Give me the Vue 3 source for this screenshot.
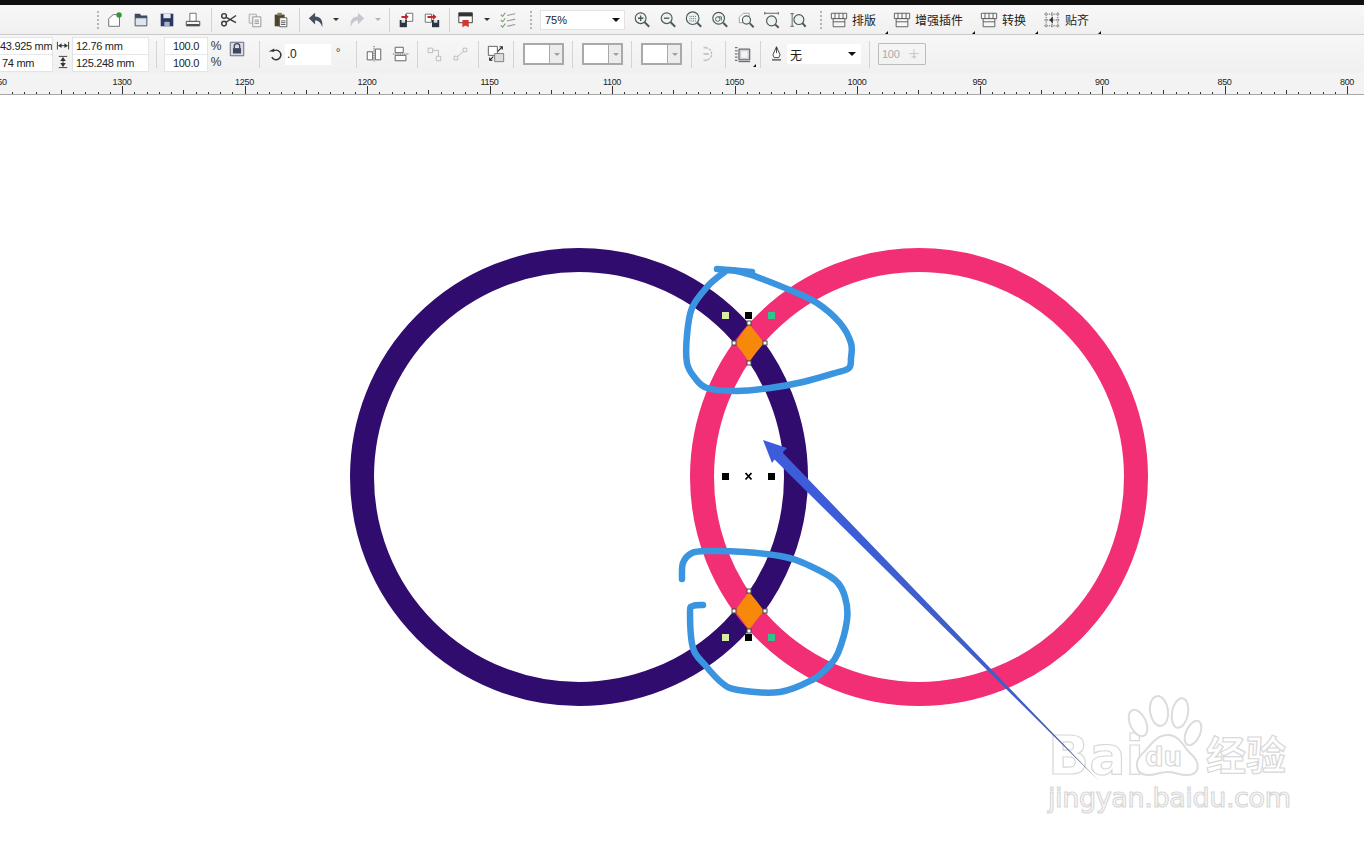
<template>
  <div class="app">
    <!-- 图标定义 -->
    <svg class="defs" aria-hidden="true">
      <symbol id="i-new" viewBox="0 0 20 20">
        <path d="M3 17V8.500L8 4h7v13z" fill="#fff" stroke="#666" />
        <circle cx="14.500" cy="4.500" r="3" fill="#2f9a35" />
      </symbol>
      <symbol id="i-open" viewBox="0 0 20 20">
        <path d="M3 3h6l1 2h7v3H3z" fill="#3c4a60" />
        <path d="M3.500 7.500h13v9h-13z" fill="#dfe5ec" stroke="#3c4a60" />
      </symbol>
      <symbol id="i-save" viewBox="0 0 20 20">
        <path d="M3 3h14v14H3z" fill="#2a3765" />
        <path d="M6 3h8v5H6z" fill="#e6e8ee" />
        <path d="M7 12h6v5H7z" fill="#aab2c8" />
      </symbol>
      <symbol id="i-print" viewBox="0 0 20 20">
        <path d="M6.500 2.500h7v9h-7z" fill="#fff" stroke="#666" />
        <path d="M2.500 11.500h15v5h-15z" fill="#f4f4f4" stroke="#444" />
        <path d="M3 14.500h14v2H3z" fill="#444" />
      </symbol>
      <symbol id="i-cut" viewBox="0 0 20 20">
        <g fill="none" stroke="#3a3a3a" stroke-width="1.600">
          <circle cx="4.500" cy="5.500" r="2.600" />
          <circle cx="4.500" cy="14" r="2.600" />
          <path d="M6.800 7l11 6M6.800 12.500l11-7.500" />
        </g>
      </symbol>
      <symbol id="i-copy" viewBox="0 0 20 20">
        <path d="M3.500 3.500h8v10h-8z" fill="#eee" stroke="#aaa" />
        <path d="M7.500 6.500h9v11h-9z" fill="#fafafa" stroke="#8d8d8d" />
        <path d="M9.500 10h5M9.500 12h5M9.500 14h5" stroke="#8d8d8d" />
      </symbol>
      <symbol id="i-paste" viewBox="0 0 20 20">
        <path d="M3 4h11v13H3z" fill="#4d432f" />
        <path d="M6 2h5v3H6z" fill="#8b7f66" />
        <path d="M8.500 7.500h8v10h-8z" fill="#fff" stroke="#555" />
        <path d="M10 11h5M10 13h5M10 15h5" stroke="#555" />
      </symbol>
      <symbol id="i-undo" viewBox="0 0 20 20">
        <path d="M2 8l7-6v4c6 0 9 4 8 12-1.500-5-4-7.500-8-7.500V15z" fill="#47505f" />
      </symbol>
      <symbol id="i-redo" viewBox="0 0 20 20">
        <path d="M18 8l-7-6v4c-6 0-9 4-8 12 1.500-5 4-7.500 8-7.500V15z" fill="#c5c9cd" />
      </symbol>
      <symbol id="i-import" viewBox="0 0 20 20">
        <path d="M10.500 2.500h7v9h-7z" fill="#fff" stroke="#666" />
        <path d="M3 10h8v8H3z" fill="#2b3440" />
        <path d="M5 10h4v3H5z" fill="#ddd" />
        <path d="M5 5.500h4V3l4 3.500-4 3.500V7.800H5z" fill="#c8232a" />
      </symbol>
      <symbol id="i-export" viewBox="0 0 20 20">
        <path d="M2.500 3.500h7v9h-7z" fill="#fff" stroke="#666" />
        <path d="M10 10h8v8h-8z" fill="#2b3440" />
        <path d="M12 10h4v3h-4z" fill="#ddd" />
        <path d="M5 5.500h6V3l4 3.500-4 3.500V7.800H5z" fill="#c8232a" />
      </symbol>
      <symbol id="i-launch" viewBox="0 0 20 20">
        <path d="M2 2h15v11H2z" fill="#fff" stroke="#333" />
        <path d="M2 2h15v4H2z" fill="#333" />
        <path d="M6 10h7v8l-3.500-2L6 18z" fill="#d4362e" />
      </symbol>
      <symbol id="i-opts" viewBox="0 0 20 20">
        <g fill="none" stroke="#7f9d63" stroke-width="1.200">
          <path d="M2 4l2 2 3-4M2 10l2 2 3-4M2 16l2 2 3-4" />
          <path d="M9 5l9-2M9 11l9-2M9 17l9-2" stroke="#999" />
        </g>
      </symbol>
      <symbol id="i-zoom-in" viewBox="0 0 20 20">
        <g fill="none" stroke="#4d5a5c">
          <circle cx="8.500" cy="8" r="6" fill="#eef3f2" stroke-width="1.300" />
          <path d="M13 12.500l5 5" stroke-width="2.200" />
          <path d="M5.500 8h6M8.500 5v6" stroke-width="1.500" />
        </g>
      </symbol>
      <symbol id="i-zoom-out" viewBox="0 0 20 20">
        <g fill="none" stroke="#4d5a5c">
          <circle cx="8.500" cy="8" r="6" fill="#eef3f2" stroke-width="1.300" />
          <path d="M13 12.500l5 5" stroke-width="2.200" />
          <path d="M5.500 8h6" stroke-width="1.500" />
        </g>
      </symbol>
      <symbol id="i-zoom-sel" viewBox="0 0 20 20">
        <g fill="none" stroke="#4d5a5c">
          <circle cx="8.500" cy="8" r="7" fill="#eef3f2" stroke-width="1.300" />
          <path d="M13.500 13l4.500 4.500" stroke-width="2.200" />
          <path d="M5 6h7M5 8.500h7M5 11h7" stroke-dasharray="1 1" />
        </g>
      </symbol>
      <symbol id="i-zoom-all" viewBox="0 0 20 20">
        <g fill="none" stroke="#4d5a5c">
          <circle cx="8.500" cy="8" r="6.500" fill="#eef3f2" stroke-width="1.300" />
          <path d="M13.500 13l4.500 4.500" stroke-width="2.200" />
          <circle cx="7.500" cy="9" r="2.500" />
          <path d="M7.500 6.500h4v4" />
        </g>
      </symbol>
      <symbol id="i-zoom-page" viewBox="0 0 20 20">
        <g fill="none" stroke="#4d5a5c">
          <path d="M2.500 7L7 2.500h6.500V13h-11z" fill="#fff" stroke="#999" />
          <circle cx="10.500" cy="10" r="4.500" fill="#eef3f2" stroke-width="1.300" />
          <path d="M14 13.500l4.500 4.500" stroke-width="2.200" />
        </g>
      </symbol>
      <symbol id="i-zoom-w" viewBox="0 0 20 20">
        <g fill="none" stroke="#4d5a5c">
          <path d="M2 2.500h15M2 1v3M17 1v3" />
          <circle cx="9.500" cy="11" r="5.500" fill="#eef3f2" stroke-width="1.300" />
          <path d="M13.500 15l4 3.500" stroke-width="2.200" />
        </g>
      </symbol>
      <symbol id="i-zoom-h" viewBox="0 0 20 20">
        <g fill="none" stroke="#4d5a5c">
          <path d="M3.500 3v14M1.500 3h4M1.500 17h4" />
          <circle cx="11" cy="9.500" r="5.500" fill="#eef3f2" stroke-width="1.300" />
          <path d="M15 13.500l3.500 4" stroke-width="2.200" />
        </g>
      </symbol>
      <symbol id="i-menu" viewBox="0 0 20 20">
        <g fill="#f6f6f6" stroke="#555">
          <path d="M1.500 2.500h17v6h-17z" />
          <path d="M3.500 8.500h13v9h-13z" />
          <path d="M5.500 2.500v6M10 2.500v6M14.500 2.500v6M3.500 12h13" />
        </g>
      </symbol>
      <symbol id="i-snap" viewBox="0 0 20 20">
        <g fill="none" stroke="#555" stroke-dasharray="1.500 1">
          <path d="M1.500 3.500h17M1.500 16.500h17M3.500 1.500v17M16.500 1.500v17M1.500 10h17M10 1.500v17" />
        </g>
        <path d="M11 6v8l-4-4z" fill="#333" />
      </symbol>
      <symbol id="i-hsize" viewBox="0 0 20 20">
        <path d="M2 4v11M18 4v11M4 9.500h12" stroke="#333" fill="none" stroke-width="1.300" />
        <path d="M3 9.500L8 6v7zM17 9.500L12 6v7z" fill="#333" />
      </symbol>
      <symbol id="i-vsize" viewBox="0 0 20 20">
        <path d="M4 2h12M4 18h12M10 4v12" stroke="#333" fill="none" stroke-width="1.300" />
        <path d="M10 3L6 8.500h8zM10 17l-4-5.500h8z" fill="#333" />
      </symbol>
      <symbol id="i-lock" viewBox="0 0 20 20">
        <path d="M2.500 2.500h15v15h-15z" fill="#d9dde3" stroke="#5a6072" />
        <path d="M7 9V7a3 3 0 016 0v2" fill="none" stroke="#3f4660" stroke-width="1.500" />
        <path d="M5.500 9h9v6h-9z" fill="#3f4660" />
      </symbol>
      <symbol id="i-rotate" viewBox="0 0 20 20">
        <path d="M7 7a6 6 0 11-1 7" fill="none" stroke="#333" stroke-width="1.800" />
        <path d="M2 7h7V3z" fill="#333" />
      </symbol>
      <symbol id="i-align1" viewBox="0 0 20 20">
        <path d="M2.500 7.500h6v9h-6zM11.500 4.500h6v12h-6z" fill="#fff" stroke="#555" />
        <path d="M10 1v18" stroke="#555" stroke-dasharray="1.500 1" />
      </symbol>
      <symbol id="i-align2" viewBox="0 0 20 20">
        <path d="M3.500 2.500h9v6h-9zM3.500 11.500h12v6h-12z" fill="#fff" stroke="#555" />
        <path d="M1 10h18" stroke="#555" stroke-dasharray="1.500 1" />
      </symbol>
      <symbol id="i-node1" viewBox="0 0 20 20">
        <path d="M3.500 3.500h5v5h-5zM12.500 12.500h5v5h-5zM8.500 6h6.500v6.500" fill="none" stroke="#b9b9b9" />
      </symbol>
      <symbol id="i-node2" viewBox="0 0 20 20">
        <path d="M3.500 12.500h4v4h-4zM13.500 3.500h4v4h-4zM7.500 12.500l6-5" fill="none" stroke="#b9b9b9" />
      </symbol>
      <symbol id="i-swap" viewBox="0 0 20 20">
        <path d="M1.500 1.500h10v10h-10z" fill="#fff" stroke="#555" />
        <path d="M8.500 9.500h10v9h-10z" fill="#ddd" stroke="#777" />
        <path d="M12 7l5-5M14 2h3v3M3 17l4-4M3 14v3h3" fill="none" stroke="#222" stroke-width="1.200" />
      </symbol>
      <symbol id="i-wrap" viewBox="0 0 20 20">
        <path d="M7 3a7 7 0 010 14" fill="none" stroke="#bbb" stroke-width="1.400" stroke-dasharray="3 1" />
        <path d="M5 3h4M5 10h6M5 17h4" stroke="#c7c7c7" stroke-width="2" />
      </symbol>
      <symbol id="i-shadow" viewBox="0 0 20 20">
        <path d="M5.500 4.500h12v12h-12z" fill="#cfd2d6" stroke="#444" />
        <path d="M8 7h7v7H8z" fill="#f5f5f5" />
        <path d="M1 3h3M1 6.500h3M1 10h3M1 13.500h3M1 17h3M5 18.500h13" stroke="#444" />
      </symbol>
      <symbol id="i-pen" viewBox="0 0 20 20">
        <path d="M10 2l4 9-1.500 3h-5L6 11z" fill="#fff" stroke="#333" />
        <path d="M10 2v7" stroke="#333" />
        <path d="M5 15.500h10v2H5z" fill="#777" />
      </symbol>
      <symbol id="i-spin" viewBox="0 0 20 20">
        <path d="M3 9.500h14M10 3v14M6.500 14h7" fill="none" stroke="#b3b3b3" />
      </symbol>
    </svg>

    <div class="top-bar"></div>

    <!-- 标准工具栏 -->
    <div class="toolbar">
      <template v-for="(item, i) in topTools" :key="i">
        <span v-if="item.kind === 'grip'" class="grip" :class="item.cls"></span>
        <span v-else-if="item.kind === 'sep'" class="top-sep" :class="item.cls"></span>
        <span v-else-if="item.kind === 'drop'" class="drop" :class="item.cls"></span>
        <span v-else class="tool" :class="item.cls">
          <svg class="ico"><use :href="'#' + item.icon" /></svg>
        </span>
      </template>

      <div class="zoom-combo">
        <span>75%</span>
        <i class="arrow"></i>
      </div>

      <span v-for="icon in zoomTools" :key="icon" class="tool">
        <svg class="ico"><use :href="'#' + icon" /></svg>
      </span>

      <span class="grip grip-zoom"></span>

      <div v-for="menu in menus" :key="menu.text" class="menu-item">
        <svg class="menu-ico"><use :href="'#' + menu.icon" /></svg>
        <span>{{ menu.text }}</span>
        <i class="corner"></i>
      </div>
    </div>

    <!-- 属性栏 -->
    <div class="propbar">
      <div class="field-stack w52">
        <div class="cell clip">43.925 mm</div>
        <div class="cell pad2">74 mm</div>
      </div>
      <div class="icon-stack">
        <svg class="small-ico"><use href="#i-hsize" /></svg>
        <svg class="small-ico"><use href="#i-vsize" /></svg>
      </div>
      <div class="field-stack w75">
        <div class="cell pad3">12.76 mm</div>
        <div class="cell pad3">125.248 mm</div>
      </div>

      <span class="sep ml8"></span>

      <div class="field-stack w42 ml8">
        <div class="cell center">100.0</div>
        <div class="cell center">100.0</div>
      </div>
      <div class="percent">
        <span>%</span>
        <span>%</span>
      </div>
      <svg class="lock ml3"><use href="#i-lock" /></svg>

      <span class="sep ml13"></span>

      <svg class="rotate ml7"><use href="#i-rotate" /></svg>
      <div class="angle ml2">.0</div>
      <span class="degree">°</span>

      <span class="sep ml11"></span>

      <span class="prop-tool w27 ml3"><svg class="ico"><use href="#i-align1" /></svg></span>
      <span class="prop-tool w27"><svg class="ico"><use href="#i-align2" /></svg></span>

      <span class="sep ml3"></span>

      <span class="prop-tool ml3"><svg class="ico"><use href="#i-node1" /></svg></span>
      <span class="prop-tool"><svg class="ico"><use href="#i-node2" /></svg></span>

      <span class="sep ml5"></span>

      <span class="prop-tool ml4"><svg class="ico"><use href="#i-swap" /></svg></span>

      <span class="sep ml4"></span>

      <div class="swatch ml9"><b></b><i class="arrow gray"></i></div>
      <span class="sep ml8"></span>
      <div class="swatch ml9"><b></b><i class="arrow gray"></i></div>
      <span class="sep ml8"></span>
      <div class="swatch ml9"><b></b><i class="arrow gray"></i></div>
      <span class="sep ml9"></span>

      <span class="prop-tool ml3"><svg class="ico"><use href="#i-wrap" /></svg></span>
      <span class="sep ml4"></span>
      <span class="prop-tool ml4"><svg class="ico"><use href="#i-shadow" /></svg><i class="corner"></i></span>
      <span class="sep ml4"></span>

      <svg class="pen ml5"><use href="#i-pen" /></svg>
      <div class="line-combo">
        <span>无</span>
        <i class="arrow"></i>
      </div>

      <span class="sep ml8"></span>

      <div class="spin-box ml8">
        <span>100</span>
        <svg class="small-ico"><use href="#i-spin" /></svg>
      </div>
    </div>

    <!-- 标尺 -->
    <svg class="ruler" viewBox="0 73 1364 22">
      <rect x="0" y="73" width="1364" height="22" fill="#f3f3f3" />
      <path :d="tickPath" stroke="#333" fill="none" />
      <path d="M0 94.500H1364" stroke="#a8a8a8" fill="none" />
      <text
        v-for="mark in rulerMarks"
        :key="mark.label"
        :x="mark.x"
        y="85"
        class="ruler-text"
      >{{ mark.label }}</text>
    </svg>

    <!-- 画布 -->
    <svg class="canvas" viewBox="0 95 1364 749">
      <defs>
        <linearGradient id="arrow-fade" gradientUnits="userSpaceOnUse" x1="770" y1="450" x2="1098" y2="780">
          <stop offset="0" stop-color="#3c5cdc" />
          <stop offset="0.75" stop-color="#3f5fc8" />
          <stop offset="1" stop-color="#5a6078" />
        </linearGradient>
      </defs>

      <circle cx="579" cy="477" r="217" fill="none" stroke="#300c6e" stroke-width="24" />
      <circle cx="919" cy="477" r="217" fill="none" stroke="#f22e75" stroke-width="24" />

      <path class="overlap" d="M749 324A229 229 0 0 0 735 343A205 205 0 0 1 749 362A205 205 0 0 1 764 343A229 229 0 0 0 749 324Z" />
      <path class="overlap" d="M749 592A205 205 0 0 0 735 611A229 229 0 0 1 749 630A229 229 0 0 1 764 611A205 205 0 0 0 749 592Z" />

      <rect v-for="(n, i) in nodes" :key="i" class="node" :x="n[0] - 2" :y="n[1] - 2" width="4" height="4" />

      <rect
        v-for="(h, i) in handles"
        :key="'h' + i"
        :x="h.x - 3.500"
        :y="h.y - 3.500"
        width="7"
        height="7"
        :fill="h.color"
      />
      <path d="M745.500 473l6 6.500M751.500 473l-6 6.500" stroke="#000" stroke-width="1.800" />

      <!-- 水印 -->
      <g class="watermark">
        <text x="1048" y="774" class="wm-bai">Bai</text>
        <ellipse cx="1138" cy="723" rx="8" ry="14" transform="rotate(-25 1138 723)" />
        <ellipse cx="1159" cy="711" rx="9" ry="15" transform="rotate(-8 1159 711)" />
        <ellipse cx="1180" cy="713" rx="8" ry="15" transform="rotate(10 1180 713)" />
        <ellipse cx="1193" cy="733" rx="7" ry="13" transform="rotate(25 1193 733)" />
        <path d="M1168 735c12 0 16 13 23 19 9 8 10 21-4 21-8 0-12-3-19-3s-13 3-20 3c-13 0-14-13-6-21 8-7 13-19 26-19z" />
        <text x="1145" y="766" class="wm-du">du</text>
        <text x="1206" y="770" class="wm-cn">经验</text>
        <text x="1048" y="807" class="wm-url" textLength="243">jingyan.baidu.com</text>
      </g>

      <!-- 手绘标注 -->
      <path class="scribble" d="M717 269L752 272" />
      <path class="scribble" :d="smooth(scribbleTop)" />
      <path class="scribble" :d="smooth(scribbleBottom)" />

      <!-- 箭头 -->
      <path d="M763 440L787 448L782.500 452.500L1098 780L774.500 459.500L772 463Z" fill="url(#arrow-fade)" />
    </svg>
  </div>
</template>

<script setup>
import { computed } from "vue";

// 顶部工具按钮
const topTools = [
  { kind: "grip" },
  { icon: "i-new" },
  { icon: "i-open" },
  { icon: "i-save" },
  { icon: "i-print" },
  { kind: "sep", cls: "wide" },
  { icon: "i-cut" },
  { icon: "i-copy" },
  { icon: "i-paste" },
  { kind: "sep", cls: "wide" },
  { icon: "i-undo", cls: "w24" },
  { kind: "drop" },
  { icon: "i-redo" },
  { kind: "drop", cls: "off" },
  { kind: "sep" },
  { icon: "i-import" },
  { icon: "i-export" },
  { kind: "sep" },
  { icon: "i-launch" },
  { kind: "drop" },
  { icon: "i-opts" },
  { kind: "grip", cls: "grip-combo" },
];

const zoomTools = [
  "i-zoom-in",
  "i-zoom-out",
  "i-zoom-sel",
  "i-zoom-all",
  "i-zoom-page",
  "i-zoom-w",
  "i-zoom-h",
];

const menus = [
  { icon: "i-menu", text: "排版" },
  { icon: "i-menu", text: "增强插件" },
  { icon: "i-menu", text: "转换" },
  { icon: "i-snap", text: "贴齐" },
];

// 标尺刻度，122.5px 一个大格
const step = 122.5;
const rulerMarks = computed(() => {
  const marks = [];
  for (let i = 0; i < 11; i++) {
    marks.push({ label: String(1300 - i * 50), x: 122 + i * step });
  }
  marks.unshift({ label: "50", x: 2 });
  return marks;
});

const tickPath = computed(() => {
  let d = "";
  for (let i = -9; i < 101; i++) {
    const x = Math.round(122 + (i * step) / 10) + 0.5;
    const idx = ((i % 10) + 10) % 10;
    const top = idx === 0 ? 86 : idx === 5 ? 90 : 92;
    d += `M${x} ${top}V94`;
  }
  return d;
});

// 选择框的控制点
const handles = [
  { x: 725.5, y: 315.5, color: "#d6eca6" },
  { x: 748.5, y: 315.5, color: "#000" },
  { x: 771.5, y: 315.5, color: "#2fc48c" },
  { x: 725.5, y: 476.5, color: "#000" },
  { x: 771.5, y: 476.5, color: "#000" },
  { x: 725.5, y: 637.5, color: "#d6eca6" },
  { x: 748.5, y: 637.5, color: "#000" },
  { x: 771.5, y: 637.5, color: "#2fc48c" },
];

// 橙色区域的节点
const nodes = [
  [749, 323],
  [734, 343],
  [765, 343],
  [749, 363],
  [749, 591],
  [734, 611],
  [765, 611],
  [749, 631],
];

// 手绘线条的采样点
const scribbleTop = [
  [752, 275], [730, 270], [722, 274], [707, 287], [692, 308], [687, 335],
  [687, 363], [695, 378], [707, 388], [737, 391], [770, 388], [803, 382],
  [835, 373], [849, 368], [851, 358], [851, 343], [840, 323], [817, 303],
  [790, 290], [752, 275],
];

const scribbleBottom = [
  [682, 579], [683, 563], [692, 553], [708, 551], [745, 552], [785, 557],
  [808, 565], [835, 580], [845, 597], [847, 620], [838, 653], [828, 667],
  [812, 680], [780, 692], [738, 690], [722, 683], [705, 665], [693, 648],
  [690, 612], [693, 606], [703, 605],
];

// Catmull-Rom 转三次贝塞尔，让线条圆滑
const smooth = (pts) => {
  let d = `M${pts[0][0]} ${pts[0][1]}`;
  for (let i = 0; i < pts.length - 1; i++) {
    const p0 = pts[i - 1] || pts[i];
    const p1 = pts[i];
    const p2 = pts[i + 1];
    const p3 = pts[i + 2] || p2;
    const c1x = p1[0] + (p2[0] - p0[0]) / 6;
    const c1y = p1[1] + (p2[1] - p0[1]) / 6;
    const c2x = p2[0] - (p3[0] - p1[0]) / 6;
    const c2y = p2[1] - (p3[1] - p1[1]) / 6;
    d += `C${c1x} ${c1y} ${c2x} ${c2y} ${p2[0]} ${p2[1]}`;
  }
  return d;
};
</script>

<style>
html,
body {
  margin: 0;
  background: #fff;
  overflow: hidden;
}
</style>

<style scoped>
.app {
  width: 1364px;
  height: 844px;
  overflow: hidden;
  background: #fff;
  display: flex;
  flex-direction: column;
  font-family: "Liberation Sans", "Noto Sans CJK SC", sans-serif;
  color: #222;
}

.defs {
  position: absolute;
  width: 0;
  height: 0;
}

.top-bar {
  height: 5px;
  background: #111;
  flex: none;
}

/* 标准工具栏 */
.toolbar {
  height: 29px;
  flex: none;
  box-sizing: content-box;
  display: flex;
  align-items: center;
  padding-left: 94px;
  background: linear-gradient(#f8f8f8, #f0f0f0);
  border-bottom: 1px solid #c9c9c9;
}

.tool {
  width: 26px;
  height: 26px;
  flex: none;
  display: flex;
  align-items: center;
  justify-content: center;
}

.tool.w24 {
  width: 24px;
}

.ico {
  width: 18px;
  height: 18px;
}

.grip {
  width: 8px;
  height: 20px;
  flex: none;
  background: radial-gradient(circle at 50% 50%, #b5b5b5 1px, transparent 1.2px) 0 0 / 8px 4px;
}

.grip-combo {
  margin-left: 6px;
  margin-right: 5px;
}

.grip-zoom {
  margin-left: 6px;
  margin-right: 5px;
}

.top-sep {
  width: 8px;
  height: 24px;
  flex: none;
  background: linear-gradient(#d2d2d2, #d2d2d2) center / 1px 100% no-repeat;
}

.top-sep.wide {
  width: 10px;
}

.drop {
  width: 16px;
  height: 10px;
  flex: none;
  position: relative;
}

.drop::after {
  content: "";
  position: absolute;
  left: 5px;
  top: 3px;
  border: 3px solid transparent;
  border-top: 3px solid #333;
  border-bottom: 0;
}

.drop.off {
  width: 15px;
}

.drop.off::after {
  border-top-color: #b5b5b5;
}

.zoom-combo {
  width: 85px;
  height: 20px;
  flex: none;
  margin-right: 4px;
  background: #fff;
  box-sizing: border-box;
  padding: 0 4px;
  display: flex;
  align-items: center;
  justify-content: space-between;
  font-size: 11px;
  border: 1px solid #e2e2e2;
}

.arrow {
  width: 0;
  height: 0;
  border: 4px solid transparent;
  border-top: 4px solid #111;
  border-bottom: 0;
  display: block;
}

.arrow.gray {
  border-width: 3px;
  border-bottom: 0;
  border-top-color: #a0a0a0;
}

.menu-item {
  display: flex;
  align-items: center;
  gap: 4px;
  height: 28px;
  padding-right: 12px;
  margin-right: 5px;
  position: relative;
  font-size: 12px;
  flex: none;
  font-family: "Noto Sans CJK SC", sans-serif;
}

.menu-ico {
  width: 18px;
  height: 18px;
}

.corner {
  position: absolute;
  right: 0;
  bottom: 0;
  width: 0;
  height: 0;
  border-left: 3px solid transparent;
  border-bottom: 3px solid #111;
}

/* 属性栏 */
.propbar {
  height: 38px;
  flex: none;
  display: flex;
  align-items: center;
  background: linear-gradient(#f7f7f7, #f0f0f0);
  font-size: 11px;
  letter-spacing: -0.3px;
}

.field-stack {
  flex: none;
  background: #fff;
  display: flex;
  flex-direction: column;
  height: 33px;
  box-shadow: 0 0 0 1px #e4e4e4;
}

.w52 {
  width: 52px;
}

.w75 {
  width: 75px;
}

.w42 {
  width: 42px;
}

.cell {
  height: 16px;
  line-height: 16px;
  white-space: nowrap;
  overflow: hidden;
}

.cell + .cell {
  border-top: 1px solid #e8e8e8;
}

.pad2 {
  padding-left: 2px;
}

.pad3 {
  padding-left: 3px;
}

.center {
  text-align: center;
}

.icon-stack {
  width: 21px;
  flex: none;
  display: flex;
  flex-direction: column;
  align-items: center;
  gap: 2px;
}

.small-ico {
  width: 14px;
  height: 14px;
  flex: none;
}

.percent {
  width: 18px;
  flex: none;
  display: flex;
  flex-direction: column;
  align-items: center;
  gap: 2px;
  font-size: 12px;
  color: #333;
}

.lock {
  width: 18px;
  height: 18px;
  flex: none;
  margin-bottom: 10px;
}

.sep {
  width: 1px;
  height: 27px;
  flex: none;
  background: #d4d4d4;
}

.rotate {
  width: 16px;
  height: 16px;
  flex: none;
}

.angle {
  width: 46px;
  height: 21px;
  line-height: 21px;
  flex: none;
  background: #fff;
  box-sizing: border-box;
  padding-left: 2px;
  font-size: 12px;
}

.degree {
  width: 14px;
  flex: none;
  text-align: center;
  color: #444;
  margin-bottom: 2px;
  font-size: 12px;
}

.prop-tool {
  width: 26px;
  height: 26px;
  flex: none;
  display: flex;
  align-items: center;
  justify-content: center;
  position: relative;
}

.prop-tool.w27 {
  width: 27px;
}

.swatch {
  width: 41px;
  height: 22px;
  flex: none;
  box-sizing: border-box;
  border: 2px solid #a9a9a9;
  display: flex;
  align-items: center;
  background: #ececec;
}

.swatch b {
  width: 24px;
  height: 18px;
  background: #fff;
  border-right: 1px solid #a9a9a9;
  flex: none;
}

.swatch .arrow {
  margin-left: 4px;
}

.pen {
  width: 21px;
  height: 18px;
  flex: none;
}

.line-combo {
  width: 74px;
  height: 20px;
  flex: none;
  background: #fff;
  box-sizing: border-box;
  padding: 0 5px 0 3px;
  display: flex;
  align-items: center;
  justify-content: space-between;
  font-size: 12px;
  font-family: "Noto Sans CJK SC", sans-serif;
}

.spin-box {
  width: 48px;
  height: 22px;
  flex: none;
  box-sizing: border-box;
  border: 1px solid #bcbcbc;
  border-radius: 1px;
  padding: 0 4px 0 3px;
  display: flex;
  align-items: center;
  justify-content: space-between;
  color: #aaa;
  font-size: 11px;
}

.ml2 { margin-left: 2px; }
.ml3 { margin-left: 3px; }
.ml4 { margin-left: 4px; }
.ml5 { margin-left: 5px; }
.ml7 { margin-left: 7px; }
.ml8 { margin-left: 8px; }
.ml9 { margin-left: 9px; }
.ml11 { margin-left: 11px; }
.ml13 { margin-left: 13px; }

/* 标尺 */
.ruler {
  width: 1364px;
  height: 22px;
  flex: none;
  display: block;
}

.ruler-text {
  font-size: 9px;
  letter-spacing: -0.3px;
  text-anchor: middle;
  fill: #222;
}

/* 画布 */
.canvas {
  width: 1364px;
  height: 749px;
  flex: none;
  display: block;
}

.overlap {
  fill: #f6890a;
}

.node {
  fill: #fff;
  stroke: #444;
  stroke-width: 1;
}

.scribble {
  fill: none;
  stroke: #3a94e0;
  stroke-width: 6.500;
  stroke-linecap: round;
  stroke-linejoin: round;
}

.watermark ellipse,
.watermark path {
  fill: #fff;
  stroke: #dcdcdc;
  stroke-width: 2;
}

.watermark text {
  fill: #fff;
  stroke: #d8d8d8;
  stroke-width: 1.200;
}

.wm-bai {
  font-family: "DejaVu Sans", sans-serif;
  font-size: 54px;
  font-weight: 700;
}

.wm-du {
  font-family: "DejaVu Sans", sans-serif;
  font-size: 26px;
  font-weight: 700;
}

.wm-cn {
  font-family: "Noto Sans CJK SC", sans-serif;
  font-size: 40px;
  font-weight: 700;
}

.wm-url {
  font-family: "DejaVu Sans", sans-serif;
  font-size: 27px;
}
</style>
